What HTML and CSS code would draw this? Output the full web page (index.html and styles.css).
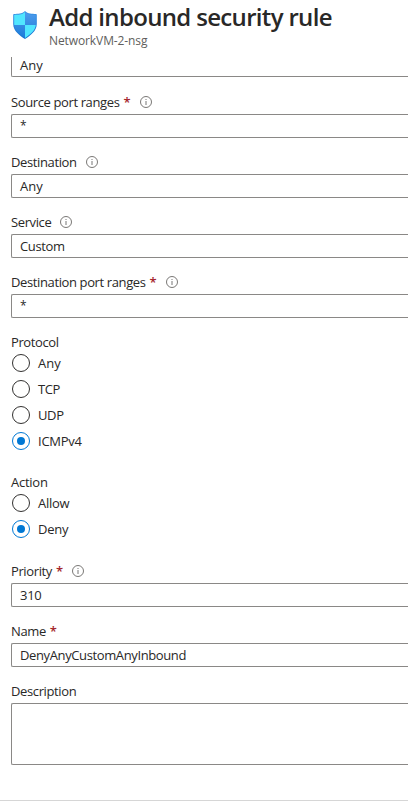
FILE: index.html
```html
<!DOCTYPE html>
<html lang="en">
<head>
<meta charset="utf-8">
<title>Add inbound security rule</title>
<link rel="stylesheet" href="styles.css">
</head>
<body>
<svg class="defs" width="0" height="0" aria-hidden="true">
  <symbol id="info" viewBox="0 0 12 12"><circle cx="6" cy="6" r="5.5" fill="none" stroke="#6b6967" stroke-width="0.9"/><path d="M6 5v4M6 3v1" stroke="#777" stroke-width="1"/></symbol>
</svg>
<header class="header">
  <svg class="shield" viewBox="0 0 24 28">
    <defs>
      <linearGradient id="edge" x1="0" y1="0" x2="0" y2="1"><stop offset="0" stop-color="#3a94e6"/><stop offset="1" stop-color="#1672cf"/></linearGradient>
      <linearGradient id="dark" x1="0" y1="0" x2="0" y2="1"><stop offset="0" stop-color="#519ded"/><stop offset="1" stop-color="#187bd9"/></linearGradient>
      <clipPath id="inner"><path d="M12 1C9 4 5 3.7 1.2 3.9V13c0 6.5 6 10.700 10.800 13.900C16.800 23.700 22.800 19.500 22.800 13V3.900C19 3.700 15 4 12 1Z"/></clipPath>
    </defs>
    <path fill="url(#edge)" d="M12 0C9 3 5 2.800 1 3C.5 3 .2 3.300.2 3.800V13c0 7 6.500 11.500 11.800 15C17.300 24.500 23.800 20 23.800 13V3.800C23.800 3.300 23.500 3 23 3C19 2.800 15 3 12 0Z"/>
    <g clip-path="url(#inner)">
      <path fill="url(#dark)" d="M0 0h24v28H0z"/>
      <path fill="#50e6ff" d="M0 0h12v14H0zM12 14h12v14H12z"/>
    </g>
  </svg>
  <div>
    <h1 class="title">Add inbound security rule</h1>
    <div class="subtitle">NetworkVM-2-nsg</div>
  </div>
</header>
<main class="form">
  <div class="box box-cut"><span class="wide">Any</span></div>
  <div class="field">
    <div class="label"><span>Source port ranges</span><b class="req">*</b><svg class="info"><use href="#info"/></svg></div>
    <div class="box"><span class="star">*</span></div>
  </div>
  <div class="field">
    <div class="label"><span>Destination</span><svg class="info"><use href="#info"/></svg></div>
    <div class="box"><span class="wide">Any</span></div>
  </div>
  <div class="field">
    <div class="label"><span>Service</span><svg class="info"><use href="#info"/></svg></div>
    <div class="box"><span>Custom</span></div>
  </div>
  <div class="field">
    <div class="label"><span>Destination port ranges</span><b class="req">*</b><svg class="info"><use href="#info"/></svg></div>
    <div class="box"><span class="star">*</span></div>
  </div>
  <div class="group protocol">
    <div class="group-label">Protocol</div>
    <div class="option"><i class="radio"></i><span class="wide">Any</span></div>
    <div class="option"><i class="radio"></i><span>TCP</span></div>
    <div class="option"><i class="radio"></i><span>UDP</span></div>
    <div class="option"><i class="radio on"></i><span class="medium">ICMPv4</span></div>
  </div>
  <div class="group action">
    <div class="group-label medium">Action</div>
    <div class="option"><i class="radio"></i><span class="medium">Allow</span></div>
    <div class="option"><i class="radio on"></i><span class="medium">Deny</span></div>
  </div>
  <div class="field">
    <div class="label"><span>Priority</span><b class="req">*</b><svg class="info"><use href="#info"/></svg></div>
    <div class="box"><span class="medium">310</span></div>
  </div>
  <div class="field">
    <div class="label"><span>Name</span><b class="req">*</b></div>
    <div class="box"><span>DenyAnyCustomAnyInbound</span></div>
  </div>
  <div class="field">
    <div class="label"><span>Description</span></div>
    <div class="box area"></div>
  </div>
</main>
<footer class="footer"></footer>
</body>
</html>
```
FILE: styles.css
```css
* { box-sizing: border-box; }
body {
  margin: 0;
  height: 801px;
  display: flex;
  flex-direction: column;
  overflow: hidden;
  background: #fff;
  color: #292827;
  font: 13px/16px "Segoe UI", "Open Sans", "Noto Sans", sans-serif;
  letter-spacing: -0.38px;
  white-space: nowrap;
}
.wide { letter-spacing: 0; }
.medium { letter-spacing: -0.25px; }
.defs { position: absolute; }
.header { display: flex; height: 57px; flex: none; padding-left: 13px; }
.shield { width: 24px; height: 28px; margin: 11px 12px 0 0; }
.title { margin: 1px 0 0; font-size: 24px; line-height: 32px; font-weight: 600; letter-spacing: -0.67px; }
.subtitle { font-size: 12px; line-height: 16px; letter-spacing: -0.1px; color: #605e5c; }
.form { padding-left: 11px; }
.field { margin-bottom: 12px; }
.label { display: flex; align-items: center; height: 24px; }
.req { color: #a4262c; font-weight: 600; letter-spacing: 0; margin-left: 4px; }
.info { width: 12px; height: 12px; margin-left: 9px; }
.box {
  display: flex;
  align-items: center;
  height: 24px;
  padding-left: 8px;
  border: 1px solid #8a8886;
  border-right: 0;
  border-radius: 2px 0 0 2px;
}
.box-cut { height: 20px; padding-bottom: 4px; border-top: 0; border-radius: 0 0 0 2px; margin-bottom: 13px; }
.area { height: 62px; }
.star { font-size: 12px; }
.group-label { height: 16px; }
.protocol { padding-top: 4px; margin-bottom: 20px; }
.action { margin-bottom: 17px; }
.option { display: flex; align-items: center; height: 26px; }
.radio {
  display: grid;
  place-items: center;
  width: 18px;
  height: 18px;
  margin: 0 8px 0 1px;
  border: 1px solid #323130;
  border-radius: 50%;
}
.radio.on { border-color: #0078d4; }
.radio.on::before { content: ""; width: 8px; height: 8px; border-radius: 50%; background: #0078d4; }
.footer { margin-top: auto; height: 1px; background: #d6d6d6; }
```
